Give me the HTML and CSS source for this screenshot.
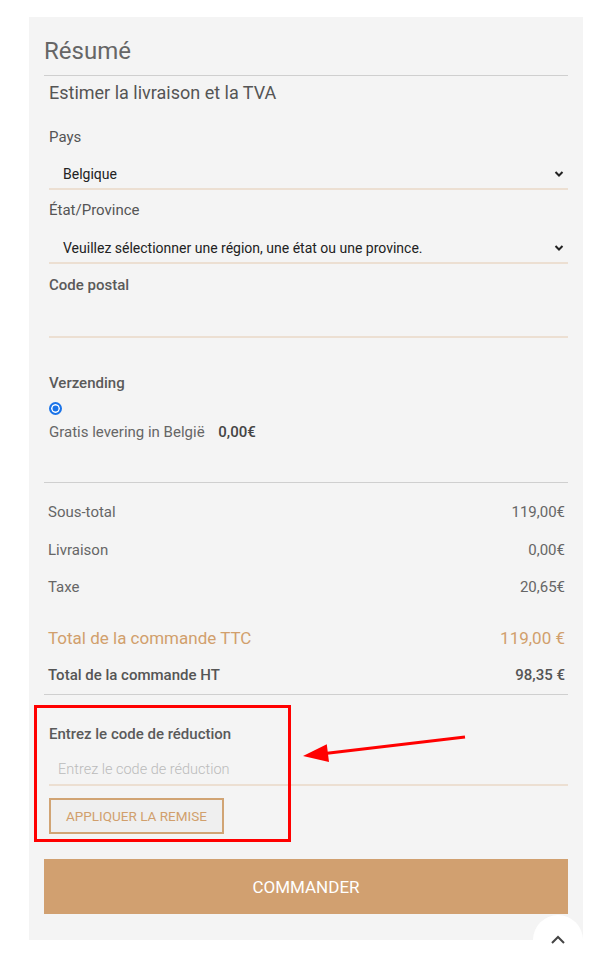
FILE: index.html
```html
<!DOCTYPE html>
<html lang="fr">
<head>
<meta charset="utf-8">
<link rel="stylesheet" href="styles.css">
</head>
<body>
<div class="panel">
  <h1 class="title">Résumé</h1>
  <div class="estimate">Estimer la livraison et la TVA</div>
  <div class="field">
    <label class="label">Pays</label>
    <div class="select"><span>Belgique</span><svg class="chev" viewBox="0 0 10 8" width="10" height="8"><path d="M1.5 2 L5 5.5 L8.5 2" fill="none" stroke="#222" stroke-width="2"/></svg></div>
  </div>
  <div class="field f2">
    <label class="label">État/Province</label>
    <div class="select"><span>Veuillez sélectionner une région, une état ou une province.</span><svg class="chev" viewBox="0 0 10 8" width="10" height="8"><path d="M1.5 2 L5 5.5 L8.5 2" fill="none" stroke="#222" stroke-width="2"/></svg></div>
  </div>
  <div class="field f3">
    <label class="label strong">Code postal</label>
    <div class="input"></div>
  </div>
  <div class="shipping">
    <div class="label strong">Verzending</div>
    <span class="radio"></span>
    <div class="method">Gratis levering in België <b>0,00€</b></div>
  </div>
  <div class="totals">
    <div class="row r1"><span>Sous-total</span><span>119,00€</span></div>
    <div class="row"><span>Livraison</span><span>0,00€</span></div>
    <div class="row"><span>Taxe</span><span>20,65€</span></div>
    <div class="row grand"><span>Total de la commande TTC</span><span>119,00 €</span></div>
    <div class="row ht"><span>Total de la commande HT</span><span>98,35 €</span></div>
  </div>
  <div class="discount">
    <div class="label strong">Entrez le code de réduction</div>
    <div class="input placeholder">Entrez le code de réduction</div>
    <button class="apply">APPLIQUER LA REMISE</button>
    <div class="highlight"></div>
    <svg class="arrow" width="180" height="40" viewBox="0 0 180 40"><line x1="166" y1="7" x2="26" y2="23.4" stroke="#f00" stroke-width="3"/><polygon points="4,26 30,32 27.8,14.2" fill="#f00"/></svg>
  </div>
  <button class="checkout">COMMANDER</button>
</div>
<div class="totop"><svg width="16" height="10" viewBox="0 0 16 10"><path d="M2 8 L8 2 L14 8" fill="none" stroke="#444" stroke-width="2"/></svg></div>
</body>
</html>
```

FILE: styles.css
```css
html, body { margin: 0; padding: 0; background: #fff; }
body { font-family: Roboto, "Noto Sans", sans-serif; color: #555; position: relative; height: 958px; overflow: hidden; }
.panel { position: relative; margin: 17px 0 0 29px; width: 554px; height: 923px; box-sizing: border-box; padding: 0 15px; background: #f4f4f4; }
.title { margin: 0; padding: 21px 0 10px; font-size: 24px; line-height: 27px; font-weight: 400; color: #666; border-bottom: 1px solid #cfcfcf; }
.estimate { padding: 5px 0 0 5px; font-size: 18px; line-height: 24px; color: #555; }
.field { margin-left: 5px; }
.label { display: block; font-size: 15px; line-height: 22px; color: #555; margin-top: 21px; }
.label.strong { font-weight: 500; color: #5a5a5a; }
.f2 .label { margin-top: 9px; }
.f3 .label { margin-top: 10px; }
.select { margin-top: 8px; height: 34px; box-sizing: border-box; border-bottom: 2px solid #ecdfd2; display: flex; align-items: center; justify-content: space-between; padding: 3px 4px 0 14px; font-size: 14px; color: #222; }
.f2 .select { margin-top: 9px; }
.input { margin-top: 6px; height: 36px; box-sizing: border-box; border-bottom: 2px solid #ecdfd2; }
.shipping { margin-left: 5px; }
.shipping .label { margin-top: 34px; }
.radio { display: block; margin: 8px 0 0 0; width: 13px; height: 13px; box-sizing: border-box; border-radius: 50%; border: 2px solid #1a73e8; background: #1a73e8; box-shadow: inset 0 0 0 1.5px #fff; }
.method { margin-top: 6px; font-size: 15px; line-height: 22px; color: #666; font-weight: 400; }
.method b { font-weight: 500; color: #444; margin-left: 10px; }
.totals { margin-top: 39px; border-top: 1px solid #cfcfcf; border-bottom: 1px solid #cfcfcf; padding: 18px 3px 8px 4px; display: flex; flex-direction: column; gap: 15.5px; }
.row { display: flex; justify-content: space-between; font-size: 15px; line-height: 22px; color: #666; font-weight: 400; }
.row.grand { margin-top: 13px; font-size: 17px; color: #d19f6c; font-weight: 400; }
.row.ht { margin-top: 0; font-weight: 500; color: #555; }
.discount { position: relative; margin-left: 5px; padding-top: 28px; }
.discount .label { margin-top: 0; }
.discount .placeholder { margin-top: 3px; height: 38px; padding: 8px 0 0 9px; font-size: 14.5px; line-height: 28px; color: #bbb; font-weight: 300; }
.apply { display: block; margin-top: 12px; height: 36px; padding: 0 15px; background: #efefef; border: 2px solid #d1a474; color: #d19f6c; font-family: inherit; font-size: 13.5px; font-weight: 400; }
.highlight { position: absolute; left: -15px; top: 10px; width: 257px; height: 137px; box-sizing: border-box; border: 3px solid #f00; }
.arrow { position: absolute; left: 250px; top: 35px; }
.checkout { display: block; margin-top: 25px; width: 524px; height: 55px; border: 0; background: #d1a070; color: #fff; font-family: inherit; font-size: 17px; font-weight: 400; }
.totop { position: absolute; left: 533px; top: 915px; width: 50px; height: 50px; border-radius: 50%; background: #fff; display: flex; justify-content: center; align-items: center; }
```
